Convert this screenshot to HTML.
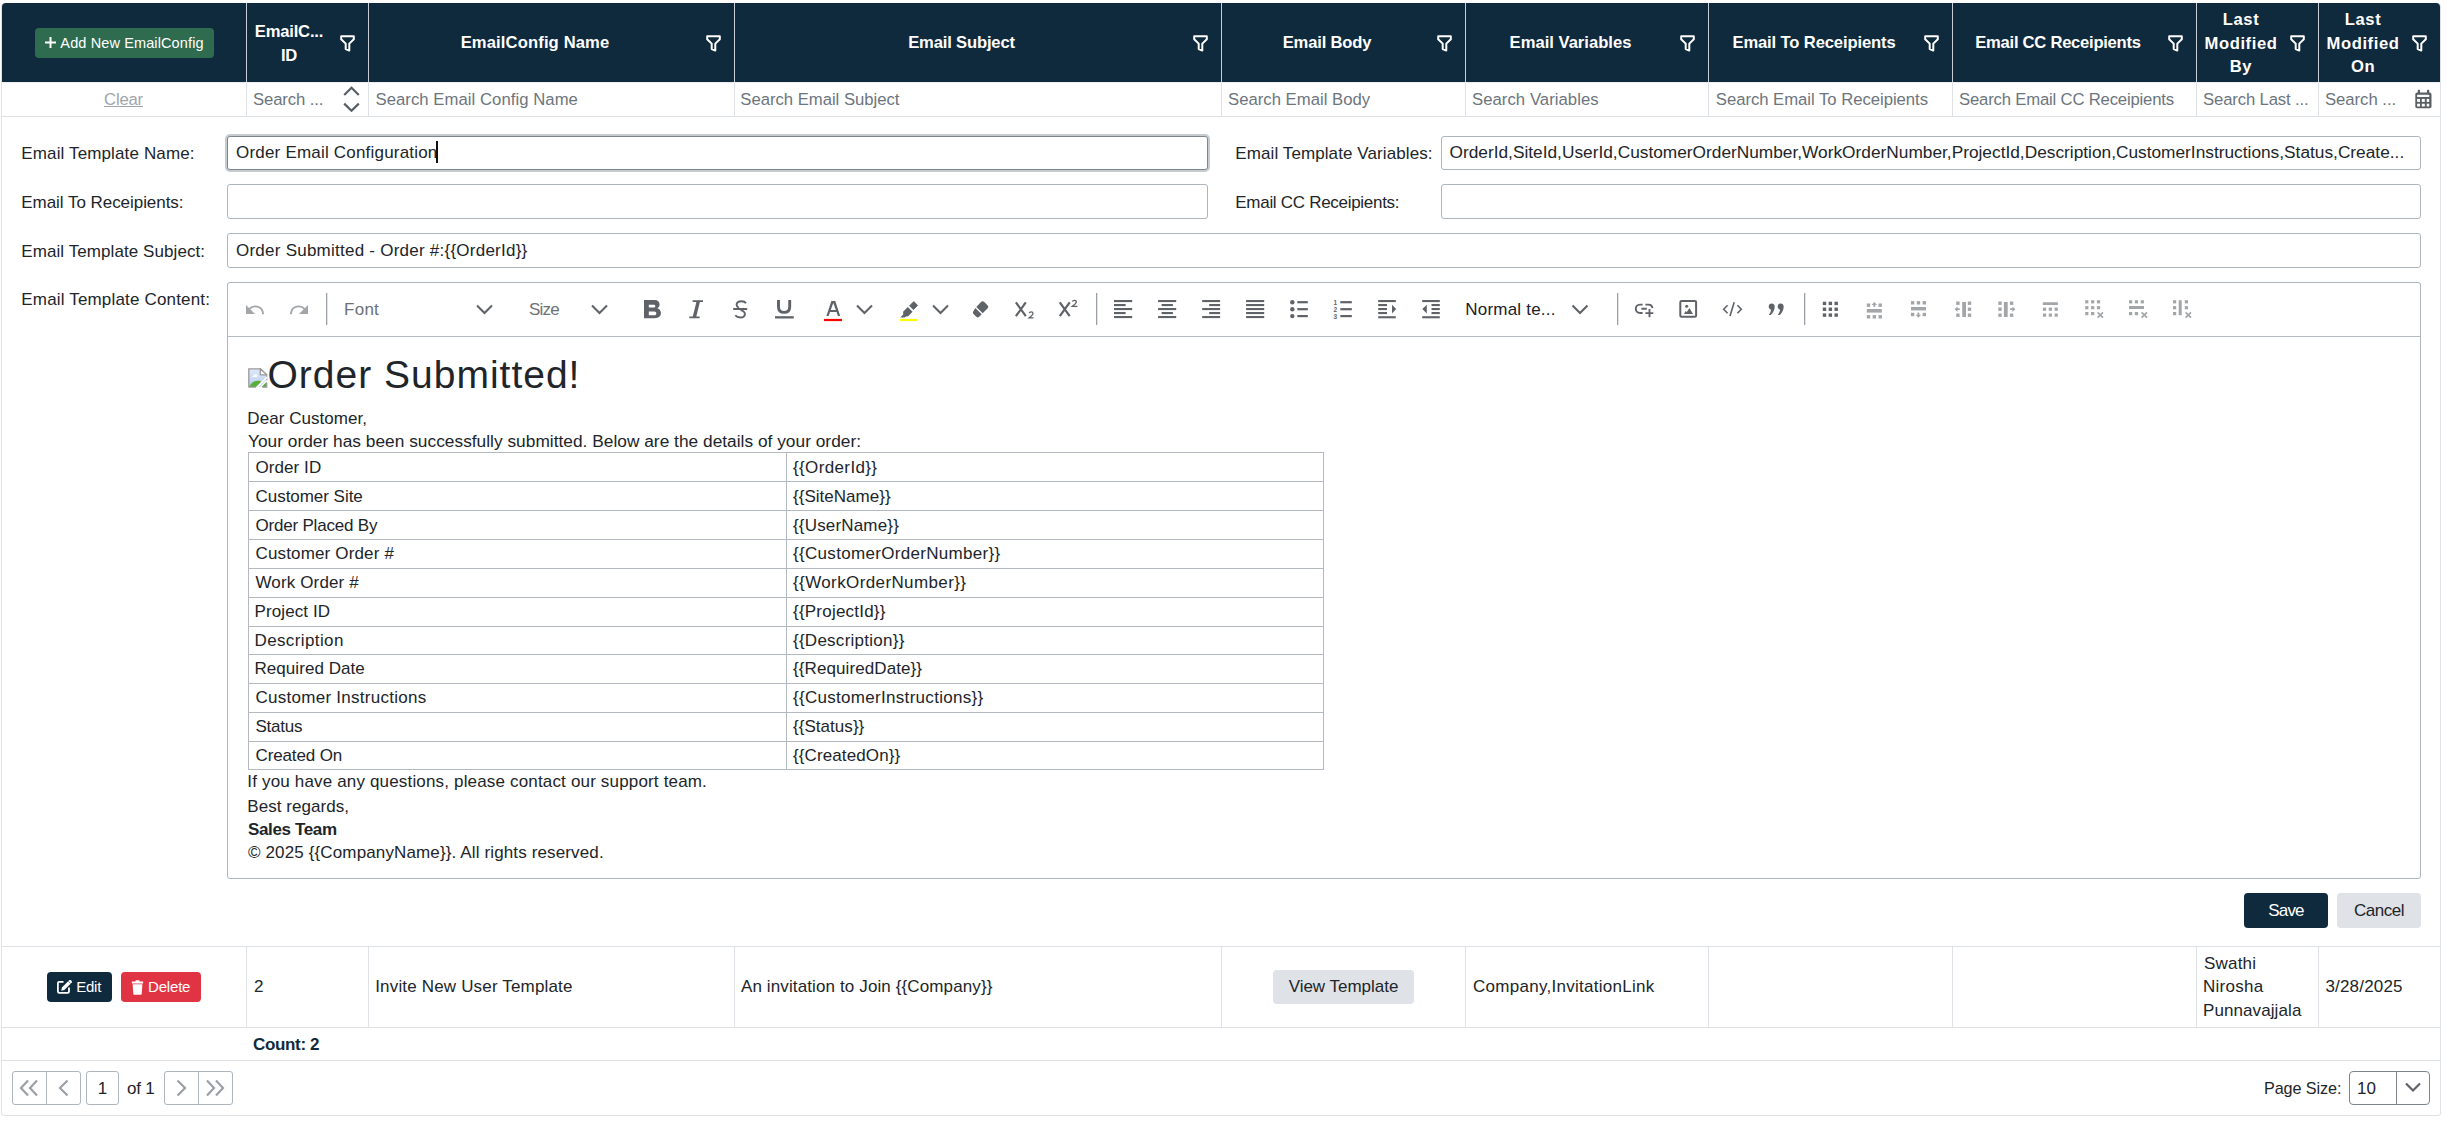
<!DOCTYPE html>
<html><head><meta charset="utf-8">
<style>
*{box-sizing:border-box;margin:0;padding:0}
html,body{width:2447px;height:1123px;background:#fff;overflow:hidden}
body{font-family:"Liberation Sans",sans-serif;font-size:17px;color:#212529;position:relative}
.a{position:absolute}
.t{position:absolute;white-space:nowrap;line-height:27px;height:24px}
#frame{left:1px;top:3px;width:2440px;height:1113px;border:1px solid #dee2e6;border-radius:3px}
#hdr{left:2px;top:3px;width:2438px;height:79px;background:#102a3d;border-radius:4px 4px 0 0}
.hv{position:absolute;top:3px;height:79px;width:1px;background:#c9ced4}
.fv{position:absolute;top:82px;height:34px;width:1px;background:#dee2e6}
.ht{position:absolute;color:#fff;font-weight:bold;text-align:center;line-height:23.5px;font-size:16.6px}
.fi{position:absolute;top:35px;width:15px;height:17px}
.ph{color:#6c757d}
.lbl{color:#212529}
.inp{position:absolute;border:1px solid #adb5bd;border-radius:3px;background:#fff}
</style></head><body>
<div id="frame" class="a"></div>
<div id="hdr" class="a"></div>
<!-- header dividers -->
<div class="hv" style="left:246px"></div>
<div class="hv" style="left:368px"></div>
<div class="hv" style="left:734px"></div>
<div class="hv" style="left:1221px"></div>
<div class="hv" style="left:1465px"></div>
<div class="hv" style="left:1708px"></div>
<div class="hv" style="left:1952px"></div>
<div class="hv" style="left:2196px"></div>
<div class="hv" style="left:2318px"></div>

<!-- add button -->
<div class="a" style="left:35px;top:28px;width:179px;height:30px;background:#2e6b4f;border-radius:4px"></div>
<div class="t" style="left:44px;top:31px;color:#fff;font-size:14.5px;line-height:24px;letter-spacing:0.12px">
<svg width="13" height="13" viewBox="0 0 13 13" style="vertical-align:-1px"><path d="M6.5 1V12M1 6.5H12" stroke="#fff" stroke-width="2"/></svg> Add New EmailConfig</div>

<!-- header texts -->
<div class="ht" style="left:245px;width:88px;top:20px;letter-spacing:-0.2px">EmailC...<br>ID</div>
<div class="ht" style="left:369px;width:332px;top:31px;letter-spacing:0.13px">EmailConfig Name</div>
<div class="ht" style="left:735px;width:453px;top:31px;letter-spacing:-0.17px">Email Subject</div>
<div class="ht" style="left:1222px;width:210px;top:31px;letter-spacing:-0.18px">Email Body</div>
<div class="ht" style="left:1466px;width:209px;top:31px">Email Variables</div>
<div class="ht" style="left:1709px;width:210px;top:31px;letter-spacing:-0.13px">Email To Receipients</div>
<div class="ht" style="left:1953px;width:210px;top:31px;letter-spacing:-0.26px">Email CC Receipients</div>
<div class="ht" style="left:2197px;width:88px;top:8px;letter-spacing:0.6px">Last<br>Modified<br>By</div>
<div class="ht" style="left:2319px;width:88px;top:8px;letter-spacing:0.6px">Last<br>Modified<br>On</div>
<svg class="fi" style="left:340px" viewBox="0 0 15 17"><path d="M1.2 1.2H13.8V4.2L9.3 8.6V15.6L5.7 14.1V8.6L1.2 4.2Z" fill="none" stroke="#fff" stroke-width="2" stroke-linejoin="round"/></svg>
<svg class="fi" style="left:706px" viewBox="0 0 15 17"><path d="M1.2 1.2H13.8V4.2L9.3 8.6V15.6L5.7 14.1V8.6L1.2 4.2Z" fill="none" stroke="#fff" stroke-width="2" stroke-linejoin="round"/></svg>
<svg class="fi" style="left:1193px" viewBox="0 0 15 17"><path d="M1.2 1.2H13.8V4.2L9.3 8.6V15.6L5.7 14.1V8.6L1.2 4.2Z" fill="none" stroke="#fff" stroke-width="2" stroke-linejoin="round"/></svg>
<svg class="fi" style="left:1437px" viewBox="0 0 15 17"><path d="M1.2 1.2H13.8V4.2L9.3 8.6V15.6L5.7 14.1V8.6L1.2 4.2Z" fill="none" stroke="#fff" stroke-width="2" stroke-linejoin="round"/></svg>
<svg class="fi" style="left:1680px" viewBox="0 0 15 17"><path d="M1.2 1.2H13.8V4.2L9.3 8.6V15.6L5.7 14.1V8.6L1.2 4.2Z" fill="none" stroke="#fff" stroke-width="2" stroke-linejoin="round"/></svg>
<svg class="fi" style="left:1924px" viewBox="0 0 15 17"><path d="M1.2 1.2H13.8V4.2L9.3 8.6V15.6L5.7 14.1V8.6L1.2 4.2Z" fill="none" stroke="#fff" stroke-width="2" stroke-linejoin="round"/></svg>
<svg class="fi" style="left:2168px" viewBox="0 0 15 17"><path d="M1.2 1.2H13.8V4.2L9.3 8.6V15.6L5.7 14.1V8.6L1.2 4.2Z" fill="none" stroke="#fff" stroke-width="2" stroke-linejoin="round"/></svg>
<svg class="fi" style="left:2290px" viewBox="0 0 15 17"><path d="M1.2 1.2H13.8V4.2L9.3 8.6V15.6L5.7 14.1V8.6L1.2 4.2Z" fill="none" stroke="#fff" stroke-width="2" stroke-linejoin="round"/></svg>
<svg class="fi" style="left:2412px" viewBox="0 0 15 17"><path d="M1.2 1.2H13.8V4.2L9.3 8.6V15.6L5.7 14.1V8.6L1.2 4.2Z" fill="none" stroke="#fff" stroke-width="2" stroke-linejoin="round"/></svg>
<!-- filter row -->
<div class="fv" style="left:246px"></div>
<div class="fv" style="left:368px"></div>
<div class="fv" style="left:734px"></div>
<div class="fv" style="left:1221px"></div>
<div class="fv" style="left:1465px"></div>
<div class="fv" style="left:1708px"></div>
<div class="fv" style="left:1952px"></div>
<div class="fv" style="left:2196px"></div>
<div class="fv" style="left:2318px"></div>
<div class="a" style="left:2px;top:116px;width:2439px;height:1px;background:#dee2e6"></div>
<div class="a" style="left:3px;top:82px;width:2437px;height:1px;background:#eceef1"></div>
<div class="t" style="left:104px;top:86px;color:#a0a6ab;font-size:16.7px;text-decoration:underline;letter-spacing:-0.175px">Clear</div>
<div class="t ph" style="left:253.0px;top:86px;font-size:16.7px;letter-spacing:-0.111px">Search ...</div>
<svg class="a" style="left:342px;top:85px" width="18" height="29" viewBox="0 0 18 29"><path d="M2.2 10 L9.5 2.7 L16.8 10 M2.2 18.6 L9.5 25.8 L16.8 18.6" fill="none" stroke="#5a5f63" stroke-width="2.2"/></svg>
<div class="t ph" style="left:375.5px;top:86px;font-size:16.7px;letter-spacing:0.048px">Search Email Config Name</div>
<div class="t ph" style="left:740.3px;top:86px;font-size:16.7px;letter-spacing:-0.021px">Search Email Subject</div>
<div class="t ph" style="left:1228px;top:86px;font-size:16.7px;letter-spacing:0.013px">Search Email Body</div>
<div class="t ph" style="left:1472px;top:86px;font-size:16.7px;letter-spacing:0.053px">Search Variables</div>
<div class="t ph" style="left:1715.8px;top:86px;font-size:16.7px;letter-spacing:-0.031px">Search Email To Receipients</div>
<div class="t ph" style="left:1959px;top:86px;font-size:16.7px;letter-spacing:-0.181px">Search Email CC Receipients</div>
<div class="t ph" style="left:2203px;top:86px;font-size:16.7px;letter-spacing:-0.143px">Search Last ...</div>
<div class="t ph" style="left:2325px;top:86px;font-size:16.7px;letter-spacing:-0.033px">Search ...</div>
<svg class="a" style="left:2414px;top:89px" width="19" height="21" viewBox="2414 89 19 21"><rect x="2415.3" y="92.6" width="16.2" height="15.6" rx="1.8" fill="#5a5f63"/><rect x="2417.8" y="89.8" width="2.2" height="3.5" rx="0.6" fill="#5a5f63"/><rect x="2427" y="89.8" width="2.2" height="3.5" rx="0.6" fill="#5a5f63"/><rect x="2417.1" y="94.8" width="12.1" height="2.2" rx="0.5" fill="#fff"/><g fill="#fff"><rect x="2417.1" y="98.9" width="2.9" height="3"/><rect x="2421.8" y="98.9" width="3" height="3"/><rect x="2426.7" y="98.9" width="2.5" height="3"/><rect x="2417.1" y="103.7" width="2.9" height="2.8"/><rect x="2421.8" y="103.7" width="3" height="2.8"/><rect x="2426.7" y="103.7" width="2.5" height="2.8"/></g></svg>
<!-- form -->
<div class="t lbl" style="left:21.3px;top:140px;letter-spacing:0.132px">Email Template Name:</div>
<div class="t lbl" style="left:21.3px;top:189px;letter-spacing:-0.045px">Email To Receipients:</div>
<div class="t lbl" style="left:21.3px;top:238px;letter-spacing:0.077px">Email Template Subject:</div>
<div class="t lbl" style="left:21.3px;top:286px;letter-spacing:0.168px">Email Template Content:</div>
<div class="t lbl" style="left:1235.3px;top:140px;letter-spacing:0.096px">Email Template Variables:</div>
<div class="t lbl" style="left:1235.3px;top:189px;letter-spacing:-0.29px">Email CC Receipients:</div>

<div class="inp" style="left:227px;top:136px;width:981px;height:34px;border-color:#7d868e;box-shadow:0 0 0 2px #c6cbd0"></div>
<div class="t" style="left:236px;top:139px;letter-spacing:0.2px">Order Email Configuration<span style="display:inline-block;width:2px;height:22px;background:#111;vertical-align:-5px;margin-left:-1.6px"></span></div>
<div class="inp" style="left:1441px;top:136px;width:980px;height:34px"></div>
<div class="t" style="left:1449.5px;top:139px;font-size:17.3px;letter-spacing:0.003px">OrderId,SiteId,UserId,CustomerOrderNumber,WorkOrderNumber,ProjectId,Description,CustomerInstructions,Status,Create...</div>
<div class="inp" style="left:227px;top:184px;width:981px;height:35px"></div>
<div class="inp" style="left:1441px;top:184px;width:980px;height:35px"></div>
<div class="inp" style="left:227px;top:233px;width:2194px;height:35px"></div>
<div class="t" style="left:236px;top:237px;letter-spacing:0.242px">Order Submitted - Order #:{{OrderId}}</div>

<!-- editor -->
<div class="inp" style="left:227px;top:282px;width:2194px;height:597px"></div>
<div class="a" style="left:228px;top:336px;width:2192px;height:1px;background:#b5bac0"></div>
<svg class="a" style="left:228px;top:283px" width="2192" height="53" viewBox="228 283 2192 53">
<path d="M246 305 L246 314 L255 314 Z" fill="#a3a6a9"/>
<path d="M249.5 308.8 C252.5 305.5 262.5 304.5 263.1 314.2" fill="none" stroke="#a3a6a9" stroke-width="1.9"/>
<path d="M308 305 L308 314 L299 314 Z" fill="#a3a6a9"/>
<path d="M304.5 308.8 C301.5 305.5 291.5 304.5 290.9 314.2" fill="none" stroke="#a3a6a9" stroke-width="1.9"/>
<rect x="326.0" y="293" width="1.3" height="32" fill="#9aa0a6"/>
<rect x="1096.0" y="293" width="1.3" height="32" fill="#9aa0a6"/>
<rect x="1617.0" y="293" width="1.3" height="32" fill="#9aa0a6"/>
<rect x="1804.0" y="293" width="1.3" height="32" fill="#9aa0a6"/>
<path d="M477 305.5 L484.5 313 L492 305.5" fill="none" stroke="#5f6368" stroke-width="2.1"/>
<path d="M592 305.5 L599.5 313 L607 305.5" fill="none" stroke="#5f6368" stroke-width="2.1"/>
<path d="M857 305.5 L864.5 313 L872 305.5" fill="none" stroke="#5f6368" stroke-width="2.1"/>
<path d="M933 305.5 L940.5 313 L948 305.5" fill="none" stroke="#5f6368" stroke-width="2.1"/>
<path d="M1572.5 305.5 L1580.0 313 L1587.5 305.5" fill="none" stroke="#5f6368" stroke-width="2.1"/>
<path fill-rule="evenodd" fill="#5f6368" d="M644 300 H654.5 C657.8 300 659.6 302 659.6 304.6 C659.6 306.4 658.7 307.7 657.4 308.3 C659.6 309 660.9 310.7 660.9 313.1 C660.9 316.3 658.7 318.2 654.9 318.2 H644 Z M648.8 304.8 V307.6 H653.6 C654.7 307.6 655.3 307 655.3 306.2 C655.3 305.4 654.7 304.8 653.6 304.8 Z M648.8 311.6 V315.2 H654.2 C655.6 315.2 656.3 314.5 656.3 313.4 C656.3 312.3 655.6 311.6 654.2 311.6 Z"/>
<path fill="#5f6368" d="M692.6 300.2 H703 V302 H699.9 L696.3 316.5 H699.6 V318.3 H689.3 V316.5 H692.8 L696.4 302 H692.6 Z"/>
<path fill="none" stroke="#5f6368" stroke-width="1.9" d="M746 303.2 C745 301.6 743.5 301.2 741.5 301.2 C738.5 301.2 736.6 302.7 736.6 304.8 C736.6 306.2 737.5 307.2 739 307.8 M740.7 310.2 C743.5 311 744.9 312.3 744.9 314 C744.9 316.2 742.9 317.5 740.3 317.5 C737.9 317.5 736.4 316.8 735.3 315.3"/>
<rect x="733.2" y="308" width="14" height="2" fill="#5f6368"/>
<path fill="none" stroke="#5f6368" stroke-width="2.9" d="M778.5 300 V307 C778.5 310.6 780.6 312.4 784.1 312.4 C787.6 312.4 789.7 310.6 789.7 307 V300"/>
<rect x="775" y="316.2" width="18.8" height="2.3" fill="#5f6368"/>
<path fill-rule="evenodd" fill="#5f6368" d="M826.4 316 L831.4 301 H835.2 L840.2 316 H837.9 L836.6 312 H830 L828.7 316 Z M830.7 310 H835.9 L833.3 302.9 Z"/>
<rect x="824" y="318.9" width="18" height="2.2" fill="#ff0000"/>
<path fill="#5f6368" stroke="#5f6368" stroke-width="0.9" stroke-linejoin="round" d="M913.8 301.6 L917.6 305.4 L913.4 309.6 L909.6 305.8 Z"/><path fill="#5f6368" d="M907.8 307.1 L912.5 311.8 L908.2 316.3 L905.8 316.5 L904.6 317.6 H900.2 L903.2 314.4 L903.1 311.8 Z"/>
<rect x="900" y="318.9" width="18" height="2.2" fill="#ffff00"/>
<path fill="#5f6368" d="M981.2 301.8 C982 301 983.3 301 984.1 301.8 L987.7 305.4 C988.5 306.2 988.5 307.5 987.7 308.3 L982.7 313.3 L976.3 306.9 Z"/>
<path fill="#5f6368" d="M975.3 307.9 L981.7 314.3 L979.2 316.8 C978.4 317.6 977.1 317.6 976.3 316.8 L973.5 314 C972.7 313.2 972.7 311.9 973.5 311.1 Z"/>
<path fill="none" stroke="#5f6368" stroke-width="2.2" d="M1015.9 302.3 L1025.8 316.2 M1025.8 302.3 L1015.9 316.2"/>
<path fill="none" stroke="#5f6368" stroke-width="2.2" d="M1059.8 302.3 L1069.7 316.2 M1069.7 302.3 L1059.8 316.2"/>
<path fill="none" stroke="#5f6368" stroke-width="1.3" d="M1029.3 313.1 C1029.5 312 1030.3 311.8 1031.1 311.8 C1032.3 311.8 1033 312.5 1033 313.4 C1033 314.6 1031.8 315.6 1029.2 317.8 H1033.6"/>
<path fill="none" stroke="#5f6368" stroke-width="1.3" d="M1072.5 301.6 C1072.7 300.5 1073.5 300.3 1074.3 300.3 C1075.5 300.3 1076.3 301 1076.3 301.9 C1076.3 303.1 1075.1 304.1 1072.4 306.3 H1077.4"/>
<rect x="1114" y="300" width="18.200000000000045" height="2.1" fill="#5f6368"/>
<rect x="1114" y="304" width="11.599999999999909" height="2.1" fill="#5f6368"/>
<rect x="1114" y="308" width="18.200000000000045" height="2.1" fill="#5f6368"/>
<rect x="1114" y="312" width="11.599999999999909" height="2.1" fill="#5f6368"/>
<rect x="1114" y="316" width="18.200000000000045" height="2.1" fill="#5f6368"/>
<rect x="1158.1" y="300" width="18.100000000000136" height="2.1" fill="#5f6368"/>
<rect x="1161.6" y="304" width="11.300000000000182" height="2.1" fill="#5f6368"/>
<rect x="1158.1" y="308" width="18.100000000000136" height="2.1" fill="#5f6368"/>
<rect x="1161.6" y="312" width="11.300000000000182" height="2.1" fill="#5f6368"/>
<rect x="1158.1" y="316" width="18.100000000000136" height="2.1" fill="#5f6368"/>
<rect x="1202.2" y="300" width="17.899999999999864" height="2.1" fill="#5f6368"/>
<rect x="1209.2" y="304" width="10.899999999999864" height="2.1" fill="#5f6368"/>
<rect x="1202.2" y="308" width="17.899999999999864" height="2.1" fill="#5f6368"/>
<rect x="1209.2" y="312" width="10.899999999999864" height="2.1" fill="#5f6368"/>
<rect x="1202.2" y="316" width="17.899999999999864" height="2.1" fill="#5f6368"/>
<rect x="1246.1" y="300" width="18.100000000000136" height="2.1" fill="#5f6368"/>
<rect x="1246.1" y="304" width="18.100000000000136" height="2.1" fill="#5f6368"/>
<rect x="1246.1" y="308" width="18.100000000000136" height="2.1" fill="#5f6368"/>
<rect x="1246.1" y="312" width="18.100000000000136" height="2.1" fill="#5f6368"/>
<rect x="1246.1" y="316" width="18.100000000000136" height="2.1" fill="#5f6368"/>
<circle cx="1292.3" cy="302.2" r="2.2" fill="#5f6368"/>
<rect x="1297.3" y="301.09999999999997" width="10.5" height="2.2" fill="#5f6368"/>
<rect x="1340.3" y="301.09999999999997" width="11.5" height="2.2" fill="#5f6368"/>
<circle cx="1292.3" cy="309.2" r="2.2" fill="#5f6368"/>
<rect x="1297.3" y="308.09999999999997" width="10.5" height="2.2" fill="#5f6368"/>
<rect x="1340.3" y="308.09999999999997" width="11.5" height="2.2" fill="#5f6368"/>
<circle cx="1292.3" cy="316.1" r="2.2" fill="#5f6368"/>
<rect x="1297.3" y="315.0" width="10.5" height="2.2" fill="#5f6368"/>
<rect x="1340.3" y="315.0" width="11.5" height="2.2" fill="#5f6368"/>
<text x="1333.6" y="304.8" font-size="6.5" font-family="Liberation Sans" font-weight="bold" fill="#5f6368">1</text>
<text x="1333.6" y="311.8" font-size="6.5" font-family="Liberation Sans" font-weight="bold" fill="#5f6368">2</text>
<text x="1333.6" y="318.8" font-size="6.5" font-family="Liberation Sans" font-weight="bold" fill="#5f6368">3</text>
<rect x="1378.2" y="300" width="17.59999999999991" height="2.1" fill="#5f6368"/>
<rect x="1378.2" y="304" width="8.799999999999955" height="2.1" fill="#5f6368"/>
<rect x="1378.2" y="308" width="8.799999999999955" height="2.1" fill="#5f6368"/>
<rect x="1378.2" y="312" width="8.799999999999955" height="2.1" fill="#5f6368"/>
<rect x="1378.2" y="316.2" width="17.59999999999991" height="2.1" fill="#5f6368"/>
<path d="M1392 304.8 L1396.2 309.1 L1392 313.4 Z" fill="#5f6368"/>
<rect x="1422.2" y="300" width="17.59999999999991" height="2.1" fill="#5f6368"/>
<rect x="1431.5" y="304" width="8.299999999999955" height="2.1" fill="#5f6368"/>
<rect x="1431.5" y="308" width="8.299999999999955" height="2.1" fill="#5f6368"/>
<rect x="1431.5" y="312" width="8.299999999999955" height="2.1" fill="#5f6368"/>
<rect x="1422.2" y="316.2" width="17.59999999999991" height="2.1" fill="#5f6368"/>
<path d="M1426.8 304.8 L1422.3 309.1 L1426.8 313.4 Z" fill="#5f6368"/>
<path fill="none" stroke="#5f6368" stroke-width="1.9" d="M1642.6 304.6 H1640 C1637.3 304.6 1635.8 306.6 1635.8 308.8 C1635.8 311 1637.3 313 1640 313 H1642.6 M1645.4 304.6 H1648.3 C1650.8 304.6 1652.2 306 1652.4 308.2 M1641.4 308.8 H1646.8 M1649.5 309 V317.2 M1645.4 313.1 H1653.3"/>
<rect x="1680.3" y="301" width="15.8" height="15.8" rx="1.3" fill="none" stroke="#5f6368" stroke-width="2"/>
<circle cx="1686.7" cy="306.2" r="1.5" fill="#5f6368"/>
<path d="M1684 313.9 L1685.6 311 L1686.8 312 L1689.4 308 L1693 313.9 Z" fill="#5f6368"/>
<path fill="none" stroke="#5f6368" stroke-width="1.6" d="M1727.6 305.2 L1723.7 309.3 L1727.6 313.3 M1737.4 305.2 L1741.3 309.3 L1737.4 313.3 M1734.2 302.2 L1730 316"/>
<path fill="#5f6368" d="M1771.6 303.4 C1773.3999999999999 303.4 1774.7 304.6 1774.7 306.5 C1774.7 309.8 1773.0 313 1770.8 315.1 H1768.8 C1770.0 313.2 1770.8 311.6 1771.1 309.7 C1769.7 309.4 1768.7 308.2 1768.7 306.5 C1768.7 304.6 1769.8999999999999 303.4 1771.6 303.4 Z"/>
<path fill="#5f6368" d="M1780.6 303.4 C1782.3999999999999 303.4 1783.7 304.6 1783.7 306.5 C1783.7 309.8 1782.0 313 1779.8 315.1 H1777.8 C1779.0 313.2 1779.8 311.6 1780.1 309.7 C1778.7 309.4 1777.7 308.2 1777.7 306.5 C1777.7 304.6 1778.8999999999999 303.4 1780.6 303.4 Z"/>
<rect x="1822.8" y="301.7" width="3.4" height="3.4" fill="#5f6368"/>
<rect x="1822.8" y="307.55" width="3.4" height="3.4" fill="#5f6368"/>
<rect x="1822.8" y="313.4" width="3.4" height="3.4" fill="#5f6368"/>
<rect x="1828.6499999999999" y="301.7" width="3.4" height="3.4" fill="#5f6368"/>
<rect x="1828.6499999999999" y="307.55" width="3.4" height="3.4" fill="#5f6368"/>
<rect x="1828.6499999999999" y="313.4" width="3.4" height="3.4" fill="#5f6368"/>
<rect x="1834.5" y="301.7" width="3.4" height="3.4" fill="#5f6368"/>
<rect x="1834.5" y="307.55" width="3.4" height="3.4" fill="#5f6368"/>
<rect x="1834.5" y="313.4" width="3.4" height="3.4" fill="#5f6368"/>
<rect x="1866.8" y="303.5" width="3.4" height="3.4" fill="#a3a6a9"/>
<rect x="1878.5" y="303.5" width="3.4" height="3.4" fill="#a3a6a9"/>
<path fill="#a3a6a9" d="M1874.3 302 L1877 305 H1875.2 V307 H1873.4 V305 H1871.6 Z"/>
<rect x="1866.8" y="309" width="15" height="3.6" fill="#a3a6a9"/>
<rect x="1866.8" y="315.1" width="3.4" height="3.4" fill="#a3a6a9"/>
<rect x="1872.6499999999999" y="315.1" width="3.4" height="3.4" fill="#a3a6a9"/>
<rect x="1878.5" y="315.1" width="3.4" height="3.4" fill="#a3a6a9"/>
<rect x="1910.8999999999999" y="301.1" width="3.4" height="3.4" fill="#a3a6a9"/>
<rect x="1916.7499999999998" y="301.1" width="3.4" height="3.4" fill="#a3a6a9"/>
<rect x="1922.6" y="301.1" width="3.4" height="3.4" fill="#a3a6a9"/>
<rect x="1911" y="307" width="15" height="3.4" fill="#a3a6a9"/>
<rect x="1910.8999999999999" y="312.8" width="3.4" height="3.4" fill="#a3a6a9"/>
<rect x="1922.6" y="312.8" width="3.4" height="3.4" fill="#a3a6a9"/>
<path fill="#a3a6a9" d="M1918.4 317.8 L1921.1 314.8 H1919.3 V312.6 H1917.5 V314.8 H1915.7 Z"/>
<rect x="1956.2" y="301.5" width="3.4" height="3.4" fill="#a3a6a9"/>
<rect x="1956.2" y="313.5" width="3.4" height="3.4" fill="#a3a6a9"/>
<rect x="1967.8" y="301.5" width="3.4" height="3.4" fill="#a3a6a9"/>
<rect x="1967.8" y="307.5" width="3.4" height="3.4" fill="#a3a6a9"/>
<rect x="1967.8" y="313.5" width="3.4" height="3.4" fill="#a3a6a9"/>
<rect x="1962.2" y="302" width="3.8" height="15" fill="#a3a6a9"/>
<path fill="#a3a6a9" d="M1954.5 309.2 L1957.5 306.5 V308.3 H1959.8 V310.1 H1957.5 V311.9 Z"/>
<rect x="1998.3" y="301.5" width="3.4" height="3.4" fill="#a3a6a9"/>
<rect x="1998.3" y="307.5" width="3.4" height="3.4" fill="#a3a6a9"/>
<rect x="1998.3" y="313.5" width="3.4" height="3.4" fill="#a3a6a9"/>
<rect x="2009.8999999999999" y="301.5" width="3.4" height="3.4" fill="#a3a6a9"/>
<rect x="2009.8999999999999" y="313.5" width="3.4" height="3.4" fill="#a3a6a9"/>
<rect x="2003.9" y="302" width="3.8" height="15" fill="#a3a6a9"/>
<path fill="#a3a6a9" d="M2015.4 309.2 L2012.4 306.5 V308.3 H2010.1 V310.1 H2012.4 V311.9 Z"/>
<rect x="2042.8" y="302.2" width="15.1" height="2.8" rx="0.6" fill="#a3a6a9"/>
<rect x="2042.9" y="307.59999999999997" width="3.2" height="3.2" fill="#a3a6a9"/>
<rect x="2042.9" y="313.5" width="3.2" height="3.2" fill="#a3a6a9"/>
<rect x="2048.75" y="307.59999999999997" width="3.2" height="3.2" fill="#a3a6a9"/>
<rect x="2048.75" y="313.5" width="3.2" height="3.2" fill="#a3a6a9"/>
<rect x="2054.6" y="307.59999999999997" width="3.2" height="3.2" fill="#a3a6a9"/>
<rect x="2054.6" y="313.5" width="3.2" height="3.2" fill="#a3a6a9"/>
<rect x="2085.2000000000003" y="300.2" width="3.2" height="3.2" fill="#a3a6a9"/>
<rect x="2085.2000000000003" y="306.09999999999997" width="3.2" height="3.2" fill="#a3a6a9"/>
<rect x="2085.2000000000003" y="312.0" width="3.2" height="3.2" fill="#a3a6a9"/>
<rect x="2091.05" y="300.2" width="3.2" height="3.2" fill="#a3a6a9"/>
<rect x="2091.05" y="306.09999999999997" width="3.2" height="3.2" fill="#a3a6a9"/>
<rect x="2091.05" y="312.0" width="3.2" height="3.2" fill="#a3a6a9"/>
<rect x="2096.9" y="300.2" width="3.2" height="3.2" fill="#a3a6a9"/>
<rect x="2096.9" y="306.09999999999997" width="3.2" height="3.2" fill="#a3a6a9"/>
<path fill="none" stroke="#a3a6a9" stroke-width="1.7" d="M2097.6 312.3 L2103.0 317.6 M2103.0 312.3 L2097.6 317.6"/>
<path fill="none" stroke="#a3a6a9" stroke-width="1.7" d="M2141.6 312.3 L2147.0 317.6 M2147.0 312.3 L2141.6 317.6"/>
<path fill="none" stroke="#a3a6a9" stroke-width="1.7" d="M2185.6 312.3 L2191.0 317.6 M2191.0 312.3 L2185.6 317.6"/>
<rect x="2129.0" y="300.2" width="3.2" height="3.2" fill="#a3a6a9"/>
<rect x="2134.85" y="300.2" width="3.2" height="3.2" fill="#a3a6a9"/>
<rect x="2140.7" y="300.2" width="3.2" height="3.2" fill="#a3a6a9"/>
<rect x="2129" y="306" width="15" height="3" fill="#a3a6a9"/>
<rect x="2129.0" y="312.0" width="3.2" height="3.2" fill="#a3a6a9"/>
<rect x="2134.85" y="312.0" width="3.2" height="3.2" fill="#a3a6a9"/>
<rect x="2173.0" y="300.2" width="3.2" height="3.2" fill="#a3a6a9"/>
<rect x="2173.0" y="306.09999999999997" width="3.2" height="3.2" fill="#a3a6a9"/>
<rect x="2173.0" y="312.0" width="3.2" height="3.2" fill="#a3a6a9"/>
<rect x="2184.8" y="300.2" width="3.2" height="3.2" fill="#a3a6a9"/>
<rect x="2184.8" y="306.09999999999997" width="3.2" height="3.2" fill="#a3a6a9"/>
<rect x="2178.7" y="300.2" width="3" height="15" fill="#a3a6a9"/>
</svg>
<div class="t" style="left:344.1px;top:296px;color:#6c7176;letter-spacing:0.233px">Font</div>
<div class="t" style="left:529px;top:296px;color:#6c7176;letter-spacing:-0.8px">Size</div>
<div class="t" style="left:1465.3px;top:296px;color:#202124;letter-spacing:0.209px">Normal te...</div>
<svg class="a" style="left:248px;top:368px" width="20" height="20" viewBox="0 0 20 20">
<defs><linearGradient id="bg" x1="0" y1="0" x2="0" y2="1"><stop offset="0" stop-color="#dfe9fa"/><stop offset="1" stop-color="#b9cdf0"/></linearGradient></defs>
<path d="M1 1 H12.5 L18.5 7 V12 L13 17.8 L12 19 H1 Z" fill="url(#bg)"/>
<path d="M1.2 19 C3 14.5 6 12.8 9.5 12.8 C11.5 12.8 13 13.3 14.2 14.2 L9.6 19 Z" fill="#5aae3c"/>
<path d="M13.6 19 L18.6 13.8 V19 Z" fill="#5aae3c"/>
<path d="M4.2 9 C4.2 8 5 7.3 6 7.3 C6.6 6.2 7.5 5.8 8.2 6.2 C9.4 6.5 9.6 7.6 9.2 9 Z" fill="#fff" opacity="0.9"/>
<path d="M0.8 19.2 V0.8 H12.3 L18.7 7 V12.3" fill="none" stroke="#999" stroke-width="1.3"/>
<path d="M12.3 0.8 V6.8 H18.7 Z" fill="#fff" stroke="#999" stroke-width="1.3" stroke-linejoin="round"/>
<path d="M18.7 14.8 V19.2 H14.3 M9.6 19.2 H0.8" fill="none" stroke="#999" stroke-width="1.3"/>
<path d="M8.4 19.8 L19.4 8.8" stroke="#fff" stroke-width="1.8"/>
</svg>
<div class="t" style="left:267.5px;top:351px;height:48px;line-height:48px;font-size:39px;letter-spacing:1px;color:#212529">Order Submitted!</div>
<div class="t" style="left:247.3px;top:405px;letter-spacing:0.054px">Dear Customer,</div>
<div class="t" style="left:248px;top:428px;font-size:17.3px;letter-spacing:0.022px">Your order has been successfully submitted. Below are the details of your order:</div>
<div class="a" style="left:248px;top:452px;width:1076px;height:1px;background:#b4b9bf"></div>
<div class="a" style="left:248px;top:481px;width:1076px;height:1px;background:#b4b9bf"></div>
<div class="a" style="left:248px;top:510px;width:1076px;height:1px;background:#b4b9bf"></div>
<div class="a" style="left:248px;top:539px;width:1076px;height:1px;background:#b4b9bf"></div>
<div class="a" style="left:248px;top:568px;width:1076px;height:1px;background:#b4b9bf"></div>
<div class="a" style="left:248px;top:597px;width:1076px;height:1px;background:#b4b9bf"></div>
<div class="a" style="left:248px;top:626px;width:1076px;height:1px;background:#b4b9bf"></div>
<div class="a" style="left:248px;top:654px;width:1076px;height:1px;background:#b4b9bf"></div>
<div class="a" style="left:248px;top:683px;width:1076px;height:1px;background:#b4b9bf"></div>
<div class="a" style="left:248px;top:712px;width:1076px;height:1px;background:#b4b9bf"></div>
<div class="a" style="left:248px;top:741px;width:1076px;height:1px;background:#b4b9bf"></div>
<div class="a" style="left:248px;top:769px;width:1076px;height:1px;background:#b4b9bf"></div>
<div class="a" style="left:248px;top:452px;width:1px;height:318px;background:#b4b9bf"></div>
<div class="a" style="left:786px;top:452px;width:1px;height:318px;background:#b4b9bf"></div>
<div class="a" style="left:1323px;top:452px;width:1px;height:318px;background:#b4b9bf"></div>
<div class="t" style="left:255.5px;top:453.9px;letter-spacing:0.071px">Order ID</div>
<div class="t" style="left:793px;top:453.9px;letter-spacing:0.37px">{{OrderId}}</div>
<div class="t" style="left:255.5px;top:482.7px;letter-spacing:-0.033px">Customer Site</div>
<div class="t" style="left:793px;top:482.7px;letter-spacing:0.027px">{{SiteName}}</div>
<div class="t" style="left:255.5px;top:511.5px;letter-spacing:-0.2px">Order Placed By</div>
<div class="t" style="left:793px;top:511.5px;letter-spacing:0.173px">{{UserName}}</div>
<div class="t" style="left:255.5px;top:540.2px;letter-spacing:0.153px">Customer Order #</div>
<div class="t" style="left:793px;top:540.2px;letter-spacing:0.309px">{{CustomerOrderNumber}}</div>
<div class="t" style="left:255.5px;top:569.0px;letter-spacing:0.136px">Work Order #</div>
<div class="t" style="left:793px;top:569.0px;letter-spacing:0.389px">{{WorkOrderNumber}}</div>
<div class="t" style="left:254.5px;top:597.8px;letter-spacing:0.111px">Project ID</div>
<div class="t" style="left:793px;top:597.8px;letter-spacing:0.217px">{{ProjectId}}</div>
<div class="t" style="left:254.5px;top:626.6px;letter-spacing:0.38px">Description</div>
<div class="t" style="left:793px;top:626.6px;letter-spacing:0.257px">{{Description}}</div>
<div class="t" style="left:254.5px;top:655.4px;letter-spacing:0.05px">Required Date</div>
<div class="t" style="left:793px;top:655.4px;letter-spacing:0.093px">{{RequiredDate}}</div>
<div class="t" style="left:255.5px;top:684.1px;letter-spacing:0.265px">Customer Instructions</div>
<div class="t" style="left:793px;top:684.1px;letter-spacing:0.3px">{{CustomerInstructions}}</div>
<div class="t" style="left:255.5px;top:712.9px;letter-spacing:-0.22px">Status</div>
<div class="t" style="left:793px;top:712.9px;letter-spacing:0.044px">{{Status}}</div>
<div class="t" style="left:255.5px;top:741.7px;letter-spacing:-0.122px">Created On</div>
<div class="t" style="left:793px;top:741.7px;letter-spacing:0.108px">{{CreatedOn}}</div>
<div class="t" style="left:247.3px;top:768px;letter-spacing:0.167px">If you have any questions, please contact our support team.</div>
<div class="t" style="left:247.3px;top:793px;letter-spacing:0.058px">Best regards,</div>
<div class="t" style="left:248px;top:816px;font-weight:bold;letter-spacing:-0.367px">Sales Team</div>
<div class="t" style="left:248px;top:839px;letter-spacing:0.133px">© 2025 {{CompanyName}}. All rights reserved.</div>
<!-- save / cancel -->
<div class="a" style="left:2244px;top:893px;width:84px;height:35px;background:#102a3d;border-radius:4px"></div>
<div class="t" style="left:2244px;top:897px;width:84px;text-align:center;color:#fff;letter-spacing:-0.8px">Save</div>
<div class="a" style="left:2337px;top:893px;width:84px;height:35px;background:#dfe2e6;border-radius:4px"></div>
<div class="t" style="left:2337px;top:897px;width:84px;text-align:center;color:#212529;letter-spacing:-0.48px">Cancel</div>

<!-- data row -->
<div class="a" style="left:2px;top:946px;width:2439px;height:1px;background:#dee2e6"></div>
<div class="a" style="left:2px;top:1027px;width:2439px;height:1px;background:#dee2e6"></div>
<div class="a" style="left:2px;top:1060px;width:2439px;height:1px;background:#dee2e6"></div>
<div class="a" style="left:246px;top:947px;width:1px;height:80px;background:#dee2e6"></div>
<div class="a" style="left:368px;top:947px;width:1px;height:80px;background:#dee2e6"></div>
<div class="a" style="left:734px;top:947px;width:1px;height:80px;background:#dee2e6"></div>
<div class="a" style="left:1221px;top:947px;width:1px;height:80px;background:#dee2e6"></div>
<div class="a" style="left:1465px;top:947px;width:1px;height:80px;background:#dee2e6"></div>
<div class="a" style="left:1708px;top:947px;width:1px;height:80px;background:#dee2e6"></div>
<div class="a" style="left:1952px;top:947px;width:1px;height:80px;background:#dee2e6"></div>
<div class="a" style="left:2196px;top:947px;width:1px;height:80px;background:#dee2e6"></div>
<div class="a" style="left:2318px;top:947px;width:1px;height:80px;background:#dee2e6"></div>
<div class="a" style="left:47px;top:972px;width:65px;height:30px;background:#102a3d;border-radius:4px"></div>
<svg class="a" style="left:56px;top:979px" width="17" height="16" viewBox="0 0 17 16"><path d="M7.5 2.8 H3.2 C2.4 2.8 1.9 3.3 1.9 4.1 V12.6 C1.9 13.4 2.4 13.9 3.2 13.9 H11.7 C12.5 13.9 13 13.4 13 12.6 V8.6" fill="none" stroke="#fff" stroke-width="1.8"/><path d="M13.2 1.3 C13.7 0.8 14.5 0.8 15 1.3 L15.6 1.9 C16.1 2.4 16.1 3.2 15.6 3.7 L8.3 11 L5.2 11.7 L5.9 8.6 Z" fill="#fff"/><path d="M12.3 2.2 L14.7 4.6" stroke="#102a3d" stroke-width="0.6"/></svg>
<div class="t" style="left:76.2px;top:973px;color:#fff;font-size:15px;letter-spacing:-0.233px">Edit</div>
<div class="a" style="left:121px;top:972px;width:80px;height:30px;background:#e03444;border-radius:4px"></div>
<svg class="a" style="left:131px;top:979.5px" width="13" height="15" viewBox="0 0 13 16"><path d="M0.5 1.5 H4 L4.8 0.3 H8.2 L9 1.5 H12.5 V3.6 H0.5 Z" fill="#fff"/><path d="M1.3 4.6 H11.7 L11 14.6 C10.9 15.4 10.5 15.7 9.8 15.7 H3.2 C2.5 15.7 2.1 15.4 2 14.6 Z" fill="#fff"/></svg>
<div class="t" style="left:148.1px;top:973px;color:#fff;font-size:15px;letter-spacing:-0.2px">Delete</div>
<div class="t" style="left:254px;top:973px">2</div>
<div class="t" style="left:375.2px;top:973px;letter-spacing:0.17px">Invite New User Template</div>
<div class="t" style="left:741px;top:973px;letter-spacing:0.119px">An invitation to Join {{Company}}</div>
<div class="a" style="left:1273px;top:970px;width:141px;height:34px;background:#dfe2e6;border-radius:4px"></div>
<div class="t" style="left:1273px;top:973px;width:141px;text-align:center;letter-spacing:-0.017px">View Template</div>
<div class="t" style="left:1473px;top:973px;letter-spacing:0.281px">Company,InvitationLink</div>
<div class="t" style="left:2204px;top:949.7px;letter-spacing:0.2px">Swathi</div>
<div class="t" style="left:2203.0px;top:973px;letter-spacing:0.283px">Nirosha</div>
<div class="t" style="left:2203.0px;top:997px;letter-spacing:0.091px">Punnavajjala</div>
<div class="t" style="left:2325.4px;top:973px;letter-spacing:0.188px">3/28/2025</div>

<!-- count -->
<div class="t" style="left:253px;top:1031px;font-weight:bold;color:#102a3d;letter-spacing:-0.343px">Count: 2</div>

<!-- pager -->
<div class="a" style="left:12px;top:1071px;width:69px;height:34px;border:1px solid #adb5bd;border-radius:3px"></div>
<div class="a" style="left:46px;top:1072px;width:1px;height:32px;background:#adb5bd"></div>
<div class="a" style="left:86px;top:1071px;width:33px;height:34px;border:1px solid #adb5bd;border-radius:3px"></div>
<div class="t" style="left:86px;top:1074.5px;width:33px;text-align:center">1</div>
<div class="t" style="left:127px;top:1074.5px;letter-spacing:-0.233px">of 1</div>
<div class="a" style="left:164px;top:1071px;width:69px;height:34px;border:1px solid #adb5bd;border-radius:3px"></div>
<div class="a" style="left:198px;top:1072px;width:1px;height:32px;background:#adb5bd"></div>
<svg class="a" style="left:12px;top:1071px" width="221" height="34" viewBox="12 1071 221 34"><path d="M28 1080.5 L21 1088 L28 1095.5 M37 1080.5 L30 1088 L37 1095.5 M67.5 1080.5 L60 1088 L67.5 1095.5 M177.5 1080.5 L185 1088 L177.5 1095.5 M207 1080.5 L214 1088 L207 1095.5 M216 1080.5 L223 1088 L216 1095.5" fill="none" stroke="#9aa0a6" stroke-width="2.2"/></svg>
<div class="t" style="left:2264px;top:1074.5px;font-size:16.2px;letter-spacing:-0.089px">Page Size:</div>
<div class="a" style="left:2349px;top:1071px;width:81px;height:34px;border:1px solid #7d868e;border-radius:4px"></div>
<div class="a" style="left:2396px;top:1072px;width:1px;height:32px;background:#7d868e"></div>
<div class="t" style="left:2357px;top:1074.5px">10</div>
<svg class="a" style="left:2404px;top:1081px" width="18" height="12" viewBox="0 0 18 12"><path d="M2 2.5 L9 9.5 L16 2.5" fill="none" stroke="#5f6368" stroke-width="2.2"/></svg>
</body></html>
